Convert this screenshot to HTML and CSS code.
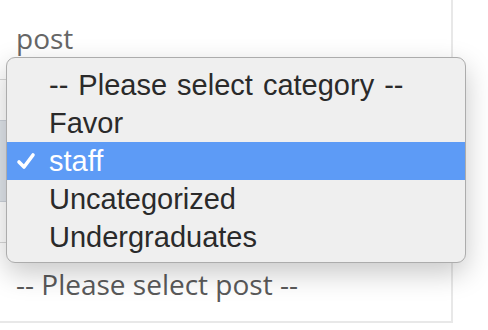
FILE: index.html
```html
<!DOCTYPE html>
<html lang="en">
<head>
  <meta charset="utf-8" />
  <title>Post select</title>
  <link rel="stylesheet" href="styles.css">
</head>

<body>
  <div class="panel">
    <div class="label">post</div>

    <!-- list behind the open menu -->
    <div class="field">
      <div class="field-row"></div>
      <div class="field-row active"></div>
      <div class="field-row"></div>
    </div>

    <div class="placeholder">-- Please select post --</div>

    <!-- open dropdown -->
    <ul class="menu">
      <li class="first">-- Please select category --</li>
      <li>Favor</li>
      <li class="selected">
        <svg class="check" width="20" height="18" viewBox="0 0 20 18">
          <path d="M3 10 L8 15 L17 3" fill="none" stroke="#ffffff" stroke-width="3.6" stroke-linecap="round" stroke-linejoin="round" />
        </svg>staff
      </li>
      <li>Uncategorized</li>
      <li>Undergraduates</li>
    </ul>
  </div>
</body>
</html>
```

FILE: styles.css
```css
body {
  margin: 0;
  background: #ffffff;
  font-family: "Open Sans", "DejaVu Sans", sans-serif;
}

.panel {
  position: relative;
  width: 435px;
  height: 302px;
  padding: 19px 0 0 16px;
  border-right: 2px solid #e8e8e8;
  border-bottom: 2px solid #e8e8e8;
}

.label {
  font-size: 28px;
  line-height: 38px;
  color: #666666;
}

.field {
  margin: 22px 0 0 -16px;
  border-top: 1px solid #d8d8d8;
  border-bottom: 1px solid #d8d8d8;
}

.field-row {
  height: 40px;
}

.field-row.active {
  height: 80px;
  background: #dfe4ea;
  border-top: 1px solid #ccd2da;
  border-bottom: 1px solid #ccd2da;
}

.placeholder {
  margin-top: 22px;
  font-size: 28px;
  line-height: 38px;
  color: #5a5a5a;
}

.menu {
  position: absolute;
  left: 6px;
  top: 57px;
  width: 458px;
  margin: 0;
  padding: 8px 0 6px;
  list-style: none;
  background: #efefef;
  border: 1px solid #acacac;
  border-radius: 9px;
  box-shadow: 0 10px 28px rgba(0, 0, 0, 0.22);
  font-family: "Liberation Sans", Arial, sans-serif;
  font-size: 29px;
  color: #2a2a2a;
}

.menu li {
  position: relative;
  height: 38px;
  line-height: 38px;
  padding-left: 42px;
}

.menu li.first {
  word-spacing: 2px;
}

.menu li.selected {
  background: #5d9bf6;
  color: #ffffff;
}

.check {
  position: absolute;
  left: 9px;
  top: 10px;
}
```
